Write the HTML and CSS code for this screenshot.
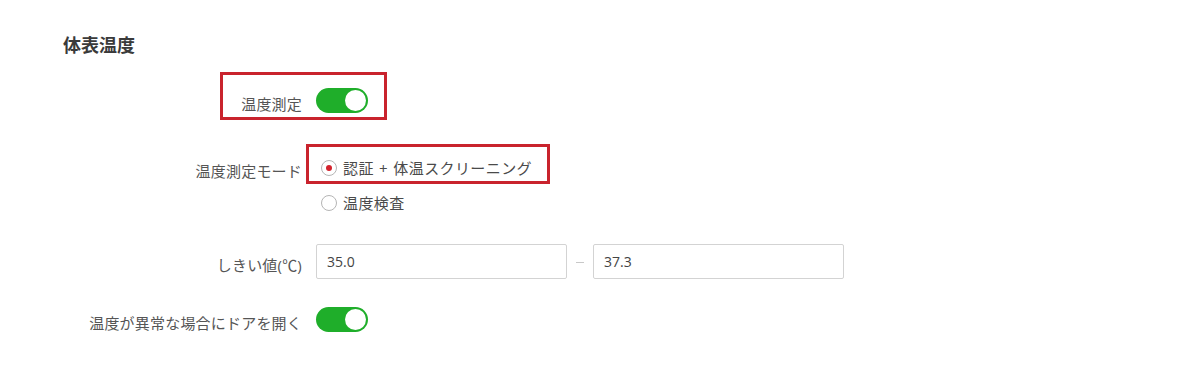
FILE: index.html
```html
<!DOCTYPE html>
<html lang="ja">
<head>
  <meta charset="UTF-8">
  <meta name="viewport" content="width=device-width, initial-scale=1.0">
  <title>体表温度</title>
  <link rel="stylesheet" href="styles.css">
</head>
<body>
  <div class="section">
    <h2 class="section-title">体表温度</h2>

    <div class="form">
      <div class="form-row row-measure">
        <span class="mark mark-measure"></span>
        <label class="form-label">温度測定</label>
        <div class="form-control">
          <span class="switch on"><span class="switch-knob"></span></span>
        </div>
      </div>

      <div class="form-row row-mode">
        <label class="form-label label-top">温度測定モード</label>
        <div class="form-control radio-group">
          <div class="radio-item checked">
            <span class="mark mark-mode"></span>
            <span class="radio"></span>
            <span>認証 + 体温スクリーニング</span>
          </div>
          <div class="radio-item">
            <span class="radio"></span>
            <span>温度検査</span>
          </div>
        </div>
      </div>

      <div class="form-row row-threshold">
        <label class="form-label">しきい値(℃)</label>
        <div class="form-control range">
          <input class="text-input" type="text" value="35.0">
          <span class="range-dash"></span>
          <input class="text-input" type="text" value="37.3">
        </div>
      </div>

      <div class="form-row row-door">
        <label class="form-label">温度が異常な場合にドアを開く</label>
        <div class="form-control">
          <span class="switch on"><span class="switch-knob"></span></span>
        </div>
      </div>
    </div>
  </div>
</body>
</html>
```

FILE: styles.css
```css
body {
  margin: 0;
  background: #ffffff;
  font-family: "Open Sans", "Noto Sans CJK JP", sans-serif;
  color: #555555;
}

.section {
  padding-top: 32px;
}

.section-title {
  margin: 0 0 0 63px;
  font-size: 18px;
  line-height: 26px;
  font-weight: bold;
  color: #3a3a3a;
}

.form-row {
  position: relative;
  display: grid;
  grid-template-columns: 302px 1fr;
  column-gap: 14px;
  align-items: center;
}

.form-label {
  font-size: 15px;
  letter-spacing: 0.2px;
  text-align: right;
  padding-top: 6px;
  white-space: nowrap;
}

.label-top {
  align-self: start;
  padding-top: 10px;
}

.row-measure {
  margin-top: 22px;
  height: 40px;
}

.row-mode {
  margin-top: 30px;
  align-items: start;
}

.row-threshold {
  margin-top: 24px;
  height: 35px;
}

.row-door {
  margin-top: 20px;
  height: 40px;
}

/* red annotation boxes */
.mark {
  position: absolute;
  border: 3px solid #c9232d;
  pointer-events: none;
}

.mark-measure {
  left: 220px;
  top: -8px;
  width: 161px;
  height: 42px;
}

.mark-mode {
  left: -10px;
  top: -6px;
  width: 238px;
  height: 34px;
}

/* switch */
.switch {
  display: block;
  position: relative;
  width: 52px;
  height: 25px;
  border-radius: 13px;
  background: #d0d0d0;
}

.switch.on {
  background: #1fae2a;
}

.switch-knob {
  position: absolute;
  top: 2px;
  right: 2px;
  width: 21px;
  height: 21px;
  border-radius: 50%;
  background: #ffffff;
}

/* radio */
.radio-group {
  display: flex;
  flex-direction: column;
}

.radio-item {
  position: relative;
  display: flex;
  align-items: center;
  gap: 6px;
  height: 35px;
  font-size: 15px;
  letter-spacing: 0.4px;
  word-spacing: 1px;
  color: #4a4a4a;
}

.radio {
  box-sizing: border-box;
  width: 16px;
  height: 16px;
  margin-left: 5px;
  border-radius: 50%;
  border: 1px solid #b5b5b5;
  background: #ffffff;
  position: relative;
}

.radio-item.checked .radio::after {
  content: "";
  position: absolute;
  left: 4px;
  top: 4px;
  width: 6px;
  height: 6px;
  border-radius: 50%;
  background: #d3222c;
}

/* threshold inputs */
.range {
  display: flex;
  align-items: center;
}

.text-input {
  box-sizing: border-box;
  width: 251px;
  height: 35px;
  padding: 0 10px;
  border: 1px solid #d3d3d3;
  border-radius: 2px;
  font-family: "Open Sans", "Noto Sans CJK JP", sans-serif;
  font-size: 14px;
  color: #444444;
  outline: none;
}

.range-dash {
  width: 8px;
  height: 1px;
  margin: 1px 9px 0;
  background: #c8c8c8;
}
```
